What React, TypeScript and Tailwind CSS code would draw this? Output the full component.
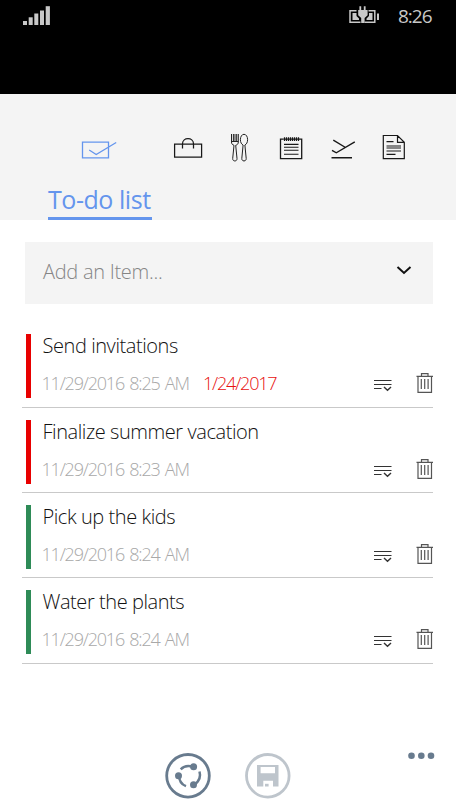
import React from "react";

type Task = {
  title: string;
  created: string;
  due?: string;
  bar: string;
};

const tasks: Task[] = [
  { title: "Send invitations", created: "11/29/2016 8:25 AM", due: "1/24/2017", bar: "bg-[#e80000]" },
  { title: "Finalize summer vacation", created: "11/29/2016 8:23 AM", bar: "bg-[#e80000]" },
  { title: "Pick up the kids", created: "11/29/2016 8:24 AM", bar: "bg-[#2e8b57]" },
  { title: "Water the plants", created: "11/29/2016 8:24 AM", bar: "bg-[#2e8b57]" },
];

function StatusBar() {
  return (
    <header className="flex h-[94px] items-start bg-black text-[#c8c8c8]">
      <svg className="ml-[22px] mt-[5px]" width="30" height="21" fill="#c8c8c8">
        <rect x="1" y="16" width="4" height="4" />
        <rect x="6.7" y="12.3" width="4" height="7.7" />
        <rect x="12.3" y="8.5" width="4" height="11.5" />
        <rect x="18" y="5.5" width="4" height="14.5" />
        <rect x="23.7" y="1.2" width="4.2" height="18.8" />
      </svg>
      <svg className="ml-[296px] mt-[4px]" width="34" height="22" viewBox="0 0 34 22" fill="none">
        <path d="M8.500 6.700H2v11.600h10.500M20.500 6.700h6.300v11.600H16.500" stroke="#c8c8c8" strokeWidth="1.500" />
        <path d="M4.500 9h4v3l2.500 2.500v1.500H4.500zM24.500 9h-3.500v3l-2.500 2.500v1.500h6z" fill="#c8c8c8" />
        <path d="M11.400 2.200h1.800V6h2.600V2.200h1.800V6h2v5.200l-3 2.800v5h-3.400v-5l-3-2.800V6h1.200z" fill="#c8c8c8" />
        <rect x="29" y="9.500" width="2" height="6.500" fill="#c8c8c8" />
      </svg>
      <span className="ml-[16px] mt-[4px] text-[19px] leading-6 font-normal tracking-[-1px]">8:26</span>
    </header>
  );
}

function Tabs() {
  return (
    <nav className="flex h-[125.500px] flex-col bg-[#f4f4f4]">
      <div className="flex h-[86px] items-start pl-[80px] pt-[36px]" aria-label="Categories">
        <svg width="40" height="36" viewBox="80 130 40 36" fill="none" stroke="#6495ed" strokeWidth="1.3">
          <path d="M82.500 142.200h26v15.600h-26zM89.200 150l7 4.500 20-12" />
        </svg>
        <svg className="ml-[52px]" width="34" height="36" viewBox="172 130 34 36" fill="none" stroke="#181818" strokeWidth="1.250">
          <path d="M174.600 144.100h27v13h-27zM182.500 148.500v-4.700c0-7 11-7 11 0v4.700" />
        </svg>
        <svg className="ml-[23px]" width="22" height="36" viewBox="229 130 22 36" fill="none" stroke="#222" strokeWidth="1">
          <path d="M231.500 134v8c0 2 1 2.800 2.500 3.300l-1.300 13.200c-.3 3.300 4.600 3.300 4.300 0l-1.300-13.200c1.600-.5 2.600-1.300 2.600-3.300v-8M233.400 134v7M235 134v7M236.700 134v7M231.500 141.500h6.800" />
          <path d="M244 134.300c-2.200 0-3.600 2.400-3.600 5.400 0 2.800 1.200 4.600 2.700 5.300l-1.300 13.500c-.3 3.300 4.700 3.300 4.400 0L244.900 145c1.500-.7 2.700-2.500 2.700-5.300 0-3-1.400-5.400-3.600-5.400z" />
        </svg>
        <svg className="ml-[27px]" width="26" height="36" viewBox="278 130 26 36" fill="none" stroke="#181818">
          <path d="M283.500 139.200h-3v19.400h21.200v-19.400h-3" strokeWidth="1.300" />
          <path d="M284.500 137.200v3.700M286.500 137.200v3.700M288.500 137.200v3.700M290.500 137.200v3.700M292.500 137.200v3.700M294.500 137.200v3.700M296.500 137.200v3.700M298.500 137.200v3.700" strokeWidth="1.200" />
          <path d="M283.500 139.100h15.500M284 144.400h14.500M284 147.300h14.500M284 150.200h14.500M284 154.200h14.500" strokeWidth="1.100" />
        </svg>
        <svg className="ml-[25px]" width="28" height="36" viewBox="329 130 28 36" fill="none" stroke="#181818" strokeWidth="1.400">
          <path d="M331.500 157.800h20.500M332 150.300l4.300 2.500 18.500-11M333.300 140.200l12.200 7.300" />
        </svg>
        <svg className="ml-[24px]" width="26" height="36" viewBox="381 130 26 36" fill="none" stroke="#181818" strokeWidth="1.200">
          <path d="M383.300 135.500h14.200l6.800 6.800v16.400h-21zM397.500 135.500v6.800h6.800M386.500 141.600h7M386.500 146h14.500M386.500 148h14.500M386.500 151h14.500M386.500 154.300h9" />
        </svg>
      </div>
      <div className="ml-[48px] flex h-[39.500px] w-[104px] items-end border-b-[3px] border-[#6495ed]">
        <h1 className="whitespace-nowrap text-[25px] leading-[36px] font-normal tracking-[-0.45px] text-[#6495ed]">To-do list</h1>
      </div>
    </nav>
  );
}

function TaskRow({ task }: { task: Task }) {
  return (
    <li className="flex h-[85.400px] items-start border-b border-[#c9c9c9] pl-[4px] pt-[12px]">
      <div className={`h-[64px] w-[5px] shrink-0 ${task.bar}`} />
      <div className="flex flex-col pl-[11.500px]">
        <span className="whitespace-nowrap text-[20px] leading-[24px] tracking-[-0.43px] text-[#111]">{task.title}</span>
        <div className="mt-[13px] ml-[-1px] flex whitespace-nowrap text-[18px] leading-[24px] tracking-[-1.2px] [word-spacing:1.8px]">
          <span className="w-[161.500px] text-[#a8a8a8]">{task.created}</span>
          {task.due && <span className="text-[#e81010]">{task.due}</span>}
        </div>
      </div>
      <div className="ml-auto mt-[38px] flex">
        <svg width="22" height="24" viewBox="372 372 22 24" fill="none" stroke="#333" strokeWidth="1.100">
          <path d="M374 380.500h17.500M374 384.500h17.500M374 388.500h7.500" />
          <path d="M384 387l3.500 3.300 3.500-3.300" strokeWidth="1.400" />
        </svg>
        <svg className="ml-[21px]" width="18" height="24" viewBox="415 372 18 24" fill="none" stroke="#555" strokeWidth="1.200">
          <path d="M416.500 376.300h16.500M418 376.300v16h13.500v-16M421.500 376v-2.300h6.500v2.300M421.300 379v10M424.700 379v10M428.100 379v10" />
        </svg>
      </div>
    </li>
  );
}

function CommandBar() {
  return (
    <footer className="mt-auto flex h-[70px] items-start">
      <svg className="ml-[165px] mt-[12px]" width="46" height="48" viewBox="165 752 46 48" fill="none" stroke="#687b8e">
        <circle cx="188" cy="775.800" r="21.300" strokeWidth="2.800" />
        <g strokeWidth="2.500">
          <path d="M180.700 769.300c3-3 7-4 12-2.500M199.500 771.500c1.500 5-.5 9.500-4.500 13M179 775c0 5.500 2.500 9.500 7 11.200" />
        </g>
        <g fill="#687b8e" stroke="none">
          <circle cx="193.600" cy="766.800" r="3.500" />
          <circle cx="178.500" cy="775.800" r="3.500" />
          <circle cx="193.500" cy="784.700" r="3.500" />
        </g>
      </svg>
      <svg className="ml-[34px] mt-[12px]" width="46" height="48" viewBox="245 752 46 48" fill="none">
        <circle cx="267.800" cy="775.800" r="21.300" stroke="#bec5cc" strokeWidth="2.800" />
        <path fill="#bec5cc" fillRule="evenodd" d="M257 765h21.500v21.500H273v-5.700h-9.700v5.700H257zM260.600 767v6.200h14.400V767z" />
        <rect x="265" y="783.800" width="3.600" height="2.700" fill="#bec5cc" />
      </svg>
      <svg className="ml-[115px] mt-[11px]" width="32" height="10" fill="#687b8e">
        <circle cx="5.500" cy="4.700" r="3.300" />
        <circle cx="15.300" cy="4.700" r="3.300" />
        <circle cx="25" cy="4.700" r="3.300" />
      </svg>
    </footer>
  );
}

export default function App() {
  return (
    <div className="flex h-[810px] w-[456px] flex-col overflow-hidden bg-white font-['Open_Sans','Noto_Sans',sans-serif] font-light">
      <StatusBar />
      <Tabs />
      <main>
        <button className="ml-[25px] mt-[22.500px] flex h-[62px] w-[408px] items-center justify-between bg-[#f4f4f4] pb-[3px] pl-[18px] pr-[20px] text-left">
          <span className="text-[20px] tracking-[-0.28px] text-[#858585]">Add an Item...</span>
          <svg className="mb-[3px]" width="18" height="14" fill="none" stroke="#111" strokeWidth="2">
            <path d="M2.500 4l6.500 6 6.500-6" />
          </svg>
        </button>
        <ul className="ml-[22px] mt-[18.300px] w-[411px]">
          {tasks.map((task) => (
            <TaskRow key={task.title} task={task} />
          ))}
        </ul>
      </main>
      <CommandBar />
    </div>
  );
}
